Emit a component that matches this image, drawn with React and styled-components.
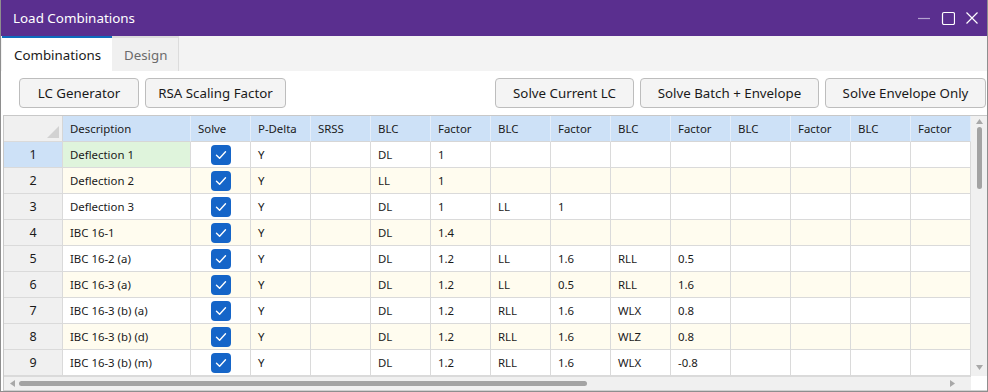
import React from 'react';
import styled, { createGlobalStyle } from 'styled-components';

const GlobalStyle = createGlobalStyle`
  html, body {
    margin: 0;
    padding: 0;
    background: #ffffff;
  }
  * {
    box-sizing: border-box;
  }
`;

const Window = styled.div`
  width: 988px;
  height: 392px;
  display: flex;
  flex-direction: column;
  border: 1px solid #8e8e8e;
  border-top: none;
  font-family: "Segoe UI", "Noto Sans", sans-serif;
  color: #1a1a1a;
  background: #ffffff;
  overflow: hidden;
`;

const TitleBar = styled.div`
  height: 36px;
  flex: none;
  margin: 0 -1px;
  background: #5a2f8f;
  color: #ffffff;
  display: flex;
  align-items: center;
  justify-content: space-between;
  padding-left: 13px;
  font-size: 13.4px;
`;

const Controls = styled.div`
  display: flex;
  align-items: center;
  gap: 10px;
  padding-right: 9px;
`;

const TabStrip = styled.div`
  height: 35px;
  flex: none;
  display: flex;
  align-items: stretch;
  background: #f3f3f3;
  padding-left: 1px;
`;

const Tab = styled.div`
  display: flex;
  align-items: center;
  padding: 0 12px;
  font-size: 13.3px;
  color: ${(p) => (p.$active ? '#1a1a1a' : '#6b6b6b')};
  background: ${(p) => (p.$active ? '#ffffff' : '#f0f0f0')};
  border-top: 2px solid ${(p) => (p.$active ? '#0f6cbd' : '#dcdcdc')};
  border-right: ${(p) => (p.$active ? 'none' : '1px solid #dcdcdc')};
  width: ${(p) => p.$w}px;
`;

const Content = styled.div`
  flex: 1;
  display: flex;
  flex-direction: column;
  gap: 7px;
  padding: 7px 0 0 2px;
  background: #ffffff;
`;

const Toolbar = styled.div`
  display: flex;
  justify-content: space-between;
  padding: 0 1px 0 16px;
`;

const ButtonGroup = styled.div`
  display: flex;
  gap: 6px;
`;

const Button = styled.button`
  height: 30px;
  width: ${(p) => p.$w}px;
  border: 1px solid #bdbdbd;
  border-radius: 4px;
  background: #f4f4f4;
  font-family: inherit;
  font-size: 13.3px;
  color: #1a1a1a;
  padding: 0;
`;

const GridFrame = styled.div`
  flex: 1;
  display: grid;
  grid-template-columns: 1fr 16px;
  grid-template-rows: 1fr 14px;
  border: 1px solid #c8c8c8;
  border-right: none;
  border-bottom-color: #d0d0d0;
`;

const TableArea = styled.div`
  overflow: hidden;
`;

const Row = styled.div`
  display: grid;
  grid-template-columns: 59px 128px repeat(13, 60px);
  height: 26px;
  background: ${(p) => (p.$alt ? '#fffcef' : '#ffffff')};
`;

const Cell = styled.div`
  display: flex;
  align-items: center;
  justify-content: ${(p) => (p.$center ? 'center' : 'flex-start')};
  padding-left: ${(p) => (p.$center ? 0 : 7)}px;
  border-right: 1px solid #dadada;
  border-bottom: 1px solid #dadada;
  font-size: 11.4px;
  background: ${(p) => p.$bg || 'transparent'};
  white-space: nowrap;
  overflow: hidden;
`;

const HeadCell = styled(Cell)`
  background: #cde1f7;
  border-right-color: #e4eefa;
  border-bottom-color: #d6d6d6;
`;

const Corner = styled(Cell)`
  position: relative;
  background: #f0f0f0;
  border-right-color: #d6d6d6;
`;

const CornerMark = styled.span`
  position: absolute;
  right: 3px;
  bottom: 3px;
  width: 0;
  height: 0;
  border-left: 12px solid transparent;
  border-bottom: 12px solid #d2d2d2;
`;

const RowHead = styled(Cell)`
  background: ${(p) => (p.$selected ? '#cde1f7' : '#f0f0f0')};
  font-size: 12.5px;
`;

const Check = styled.span`
  width: 20px;
  height: 20px;
  border-radius: 4px;
  background: #1565c8;
  display: flex;
  align-items: center;
  justify-content: center;
`;

const VScroll = styled.div`
  background: #f0f0f0;
  display: flex;
  flex-direction: column;
  align-items: center;
  padding: 3px 0 6px;
`;

const VThumb = styled.div`
  width: 5px;
  height: 62px;
  margin-top: 3px;
  border-radius: 3px;
  background: #a3a3a3;
`;

const HScroll = styled.div`
  background: #f0f0f0;
  display: flex;
  align-items: center;
  padding: 0 16px 0 6px;
  border-top: 1px solid #dadada;
`;

const HThumb = styled.div`
  width: 568px;
  height: 5px;
  margin-left: 4px;
  border-radius: 3px;
  background: #a3a3a3;
`;

const Spacer = styled.div`
  flex: 1;
`;

const ScrollCorner = styled.div`
  background: #ffffff;
`;

const Arrow = ({ dir }) => {
  const paths = {
    up: 'M0 5 L3.5 0 L7 5 Z',
    down: 'M0 0 L7 0 L3.5 5 Z',
    left: 'M5 0 L5 7 L0 3.5 Z',
    right: 'M0 0 L5 3.5 L0 7 Z',
  };
  const vertical = dir === 'up' || dir === 'down';
  return (
    <svg width={vertical ? 7 : 5} height={vertical ? 5 : 7} viewBox={vertical ? '0 0 7 5' : '0 0 5 7'}>
      <path d={paths[dir]} fill="#a8a8a8" />
    </svg>
  );
};

const CheckBox = () => (
  <Check>
    <svg width="12" height="10" viewBox="0 0 12 10">
      <path d="M1.5 5.2 L4.6 8.2 L10.5 1.8" fill="none" stroke="#ffffff" strokeWidth="1.4" strokeLinecap="round" strokeLinejoin="round" />
    </svg>
  </Check>
);

const headers = ['Description', 'Solve', 'P-Delta', 'SRSS', 'BLC', 'Factor', 'BLC', 'Factor', 'BLC', 'Factor', 'BLC', 'Factor', 'BLC', 'Factor'];

const rows = [
  ['Deflection 1', ['DL', '1']],
  ['Deflection 2', ['LL', '1']],
  ['Deflection 3', ['DL', '1', 'LL', '1']],
  ['IBC 16-1', ['DL', '1.4']],
  ['IBC 16-2 (a)', ['DL', '1.2', 'LL', '1.6', 'RLL', '0.5']],
  ['IBC 16-3 (a)', ['DL', '1.2', 'LL', '0.5', 'RLL', '1.6']],
  ['IBC 16-3 (b) (a)', ['DL', '1.2', 'RLL', '1.6', 'WLX', '0.8']],
  ['IBC 16-3 (b) (d)', ['DL', '1.2', 'RLL', '1.6', 'WLZ', '0.8']],
  ['IBC 16-3 (b) (m)', ['DL', '1.2', 'RLL', '1.6', 'WLX', '-0.8']],
];

const App = () => (
  <>
    <GlobalStyle />
    <Window>
      <TitleBar>
        <span>Load Combinations</span>
        <Controls>
          <svg width="14" height="14" viewBox="0 0 14 14">
            <path d="M1 7.5 H13" stroke="#b4a2d0" strokeWidth="1.2" />
          </svg>
          <svg width="14" height="14" viewBox="0 0 14 14">
            <rect x="1.5" y="1.5" width="12" height="12" rx="1.5" fill="none" stroke="#ffffff" strokeWidth="1.2" />
          </svg>
          <svg width="14" height="14" viewBox="0 0 14 14">
            <path d="M1.5 1.5 L12.5 12.5 M12.5 1.5 L1.5 12.5" stroke="#ffffff" strokeWidth="1.2" />
          </svg>
        </Controls>
      </TitleBar>
      <TabStrip>
        <Tab $active $w={110}>Combinations</Tab>
        <Tab $w={67}>Design</Tab>
      </TabStrip>
      <Content>
        <Toolbar>
          <ButtonGroup>
            <Button $w={120}>LC Generator</Button>
            <Button $w={141}>RSA Scaling Factor</Button>
          </ButtonGroup>
          <ButtonGroup>
            <Button $w={139}>Solve Current LC</Button>
            <Button $w={179}>Solve Batch + Envelope</Button>
            <Button $w={161}>Solve Envelope Only</Button>
          </ButtonGroup>
        </Toolbar>
        <GridFrame>
          <TableArea>
            <Row>
              <Corner>
                <CornerMark />
              </Corner>
              {headers.map((h, i) => (
                <HeadCell key={i}>{h}</HeadCell>
              ))}
            </Row>
            {rows.map(([desc, vals], i) => {
              const cells = Array.from({ length: 10 }, (_, k) => vals[k] || '');
              return (
                <Row key={i} $alt={i % 2 === 1}>
                  <RowHead $center $selected={i === 0}>{i + 1}</RowHead>
                  <Cell $bg={i === 0 ? '#dff4dc' : undefined}>{desc}</Cell>
                  <Cell $center>
                    <CheckBox />
                  </Cell>
                  <Cell>Y</Cell>
                  <Cell />
                  {cells.map((v, k) => (
                    <Cell key={k}>{v}</Cell>
                  ))}
                </Row>
              );
            })}
          </TableArea>
          <VScroll>
            <Arrow dir="up" />
            <VThumb />
            <Spacer />
            <Arrow dir="down" />
          </VScroll>
          <HScroll>
            <Arrow dir="left" />
            <HThumb />
            <Spacer />
            <Arrow dir="right" />
          </HScroll>
          <ScrollCorner />
        </GridFrame>
      </Content>
    </Window>
  </>
);

export default App;
